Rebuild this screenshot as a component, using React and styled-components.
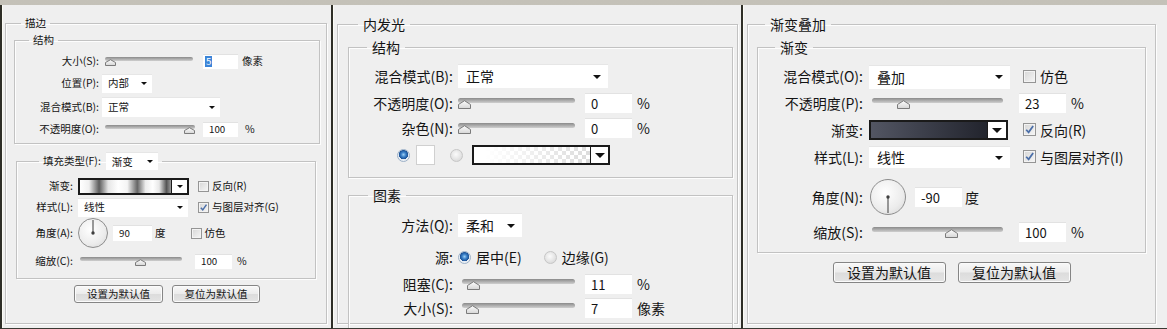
import React from "react";
import styled, { createGlobalStyle } from "styled-components";

const GlobalStyle = createGlobalStyle`
  html, body { margin: 0; padding: 0; background: #cdcac2; }
  body { font-family: "Noto Sans CJK SC", "Noto Sans", sans-serif; color: #141414; }
  * { box-sizing: border-box; }
`;

const Page = styled.div`
  width: 1167px;
  height: 329px;
  overflow: hidden;
  padding-top: 5px;
  background: linear-gradient(#c4c1b8, #d3d0c8);
`;

const Panels = styled.div`
  display: flex;
  height: 324px;
`;

const Panel = styled.section`
  flex: none;
  width: ${(p) => p.$w}px;
  height: 100%;
  overflow: hidden;
  background: #efefef;
  border-left: 2px solid #2e2e27;
  border-bottom: 1px solid #3a3a33;
  box-shadow: inset 1px 0 0 #fbfbf4;
  font-size: ${(p) => p.$fs}px;
  line-height: 1.2;
`;

const Group = styled.fieldset`
  margin: ${(p) => p.$m};
  padding: ${(p) => p.$p};
  min-width: 0;
  border: 1px solid #c2c2c2;
  box-shadow: inset 1px 1px 0 #fdfdfd, 1px 1px 0 #fdfdfd;
  ${(p) => (p.$h ? `height: ${p.$h}px;` : "")}
  --lw: ${(p) => p.$lw || 0}px;
  --lg: ${(p) => p.$lg || 0}px;
`;

const Legend = styled.legend`
  margin-left: ${(p) => p.$ml}px;
  padding: 0 ${(p) => p.$pad ?? 5}px;
  height: ${(p) => p.$lh}px;
  line-height: ${(p) => p.$lh}px;
`;

const LegendInner = styled.span`
  display: inline-flex;
  align-items: center;
  height: 100%;
  gap: ${(p) => p.$gap}px;
`;

const Row = styled.div`
  display: flex;
  align-items: center;
  height: ${(p) => p.$h}px;
  margin-top: ${(p) => p.$mt || 0}px;
  padding-left: ${(p) => p.$pl || 0}px;
  white-space: nowrap;
`;

const Label = styled.span`
  flex: none;
  width: var(--lw);
  margin-right: var(--lg);
  text-align: right;
`;

const Unit = styled.span`
  flex: none;
  margin-left: ${(p) => p.$ml || 0}px;
`;

const Field = styled.div`
  flex: none;
  display: flex;
  align-items: center;
  width: ${(p) => p.$w}px;
  height: ${(p) => p.$h}px;
  margin-left: ${(p) => p.$ml || 0}px;
  padding-left: ${(p) => p.$pl ?? 6}px;
  background: #fff;
  border-top: 1px solid #e2e2e2;
  font-size: 0.93em;
`;

const Picked = styled.span`
  background: #3b84d8;
  color: #fff;
  padding: 0 1px;
`;

const SelectBox = styled.div`
  flex: none;
  display: flex;
  align-items: center;
  justify-content: space-between;
  width: ${(p) => p.$w}px;
  height: ${(p) => p.$h}px;
  margin-left: ${(p) => p.$ml || 0}px;
  padding: 0 ${(p) => p.$pr}px 0 ${(p) => p.$pl}px;
  background: #fff;
  border-top: 1px solid #e6e6e6;
`;

const Caret = styled.span`
  width: 0;
  height: 0;
  border-left: ${(p) => p.$s}px solid transparent;
  border-right: ${(p) => p.$s}px solid transparent;
  border-top: ${(p) => p.$s}px solid #111;
`;

const Select = ({ w, h, ml, small, children }) => (
  <SelectBox $w={w} $h={h} $ml={ml} $pl={small ? 6 : 8} $pr={small ? 5 : 7}>
    <span>{children}</span>
    <Caret $s={small ? 3 : 4} />
  </SelectBox>
);

const SliderBox = styled.div`
  position: relative;
  flex: none;
  width: ${(p) => p.$w}px;
  height: 16px;
  margin-left: ${(p) => p.$ml || 0}px;
`;

const Track = styled.div`
  position: absolute;
  left: 0;
  right: 0;
  top: ${(p) => (p.$small ? 4 : 3)}px;
  height: ${(p) => (p.$small ? 4 : 5)}px;
  border-radius: 3px;
  background: linear-gradient(#8a8a8a, #a9a9a9 45%, #cfcfcf);
`;

const Thumb = styled.svg`
  position: absolute;
  top: ${(p) => (p.$small ? 6 : 5)}px;
`;

const Slider = ({ w, v, ml, small }) => {
  const tw = small ? 11 : 13;
  const th = small ? 7 : 9;
  return (
    <SliderBox $w={w} $ml={ml}>
      <Track $small={small} />
      <Thumb
        $small={small}
        width={tw}
        height={th}
        style={{ left: Math.round(v * (w - tw)) }}
      >
        <defs>
          <linearGradient id="thumbFill" x1="0" y1="0" x2="0" y2="1">
            <stop offset="0" stopColor="#fdfdfd" />
            <stop offset="1" stopColor="#d6d6d6" />
          </linearGradient>
        </defs>
        <path
          d={`M0.5 ${th - 0.5} V${th / 2} L${tw / 2} 0.7 L${tw - 0.5} ${th / 2} V${th - 0.5} Z`}
          fill="url(#thumbFill)"
          stroke="#7b7b7b"
          strokeWidth="1"
          strokeLinejoin="round"
        />
      </Thumb>
    </SliderBox>
  );
};

const CheckWrap = styled.span`
  flex: none;
  display: inline-flex;
  align-items: center;
  gap: ${(p) => p.$gap}px;
  margin-left: ${(p) => p.$ml || 0}px;
`;

const CheckBox = styled.span`
  flex: none;
  display: inline-flex;
  align-items: center;
  justify-content: center;
  width: ${(p) => p.$s}px;
  height: ${(p) => p.$s}px;
  border: 1px solid #959595;
  background: linear-gradient(135deg, #d6d6d6, #f6f6f6);
  box-shadow: inset 0 0 0 1px #f3f3f3;
`;

const Check = ({ on, ml, small, children }) => {
  const s = small ? 11 : 13;
  return (
    <CheckWrap $ml={ml} $gap={small ? 3 : 4}>
      <CheckBox $s={s}>
        {on && (
          <svg width={s - 2} height={s - 2} viewBox="0 0 10 10">
            <path d="M2 5.2 L4.2 7.6 L8.3 1.8" fill="none" stroke="#4a6ea8" strokeWidth="1.6" />
          </svg>
        )}
      </CheckBox>
      {children}
    </CheckWrap>
  );
};

const Radio = styled.span`
  flex: none;
  width: 13px;
  height: 13px;
  border-radius: 50%;
  margin-left: ${(p) => p.$ml || 0}px;
  border: 1px solid ${(p) => (p.$on ? "#9db1c8" : "#c6c6c6")};
  background: ${(p) =>
    p.$on
      ? "radial-gradient(circle at 50% 42%, #9fd0f5 0, #3a80c8 28%, #1c5296 52%, #e4ebf2 58%, #f7f7f7 100%)"
      : "radial-gradient(circle at 45% 40%, #fbfbfb, #dadada 80%)"};
`;

const RadioText = styled.span`
  flex: none;
  margin-left: ${(p) => p.$ml || 0}px;
`;

const ColorChip = styled.span`
  flex: none;
  width: ${(p) => p.$w}px;
  height: ${(p) => p.$h}px;
  margin-left: ${(p) => p.$ml || 0}px;
  background: #fff;
  border: 1px solid #d0d0d0;
`;

const fills = {
  bands:
    "linear-gradient(to right, #fff 0%, #f0f0f0 10%, #5c5c5c 21%, #e6e6e6 31%, #fff 42%, #f4f4f4 52%, #666 63%, #ececec 72%, #fff 80%, #e8e8e8 87%, #555 95%, #9a9a9a 100%)",
  checker:
    "linear-gradient(to right, #fff 10%, rgba(255,255,255,0.2)), repeating-conic-gradient(#d3d3d3 0 25%, #fff 0 50%) 0 0 / 8px 8px",
  dark: "linear-gradient(to right, #535663, #3c3f4b 45%, #22242d)",
};

const SwatchBox = styled.div`
  flex: none;
  display: flex;
  width: ${(p) => p.$w}px;
  height: ${(p) => p.$h}px;
  margin-left: ${(p) => p.$ml || 0}px;
  border: ${(p) => (p.$thick ? 2 : 1)}px solid #1a1a1a;
  background: #fff;
`;

const SwatchFill = styled.div`
  flex: 1;
  background: ${(p) => fills[p.$kind]};
  border-right: 1px solid #1a1a1a;
`;

const SwatchArrow = styled.div`
  flex: none;
  width: ${(p) => p.$aw}px;
  display: flex;
  align-items: center;
  justify-content: center;
`;

const Swatch = ({ kind, w, h, aw, ml, small, thick }) => (
  <SwatchBox $w={w} $h={h} $ml={ml} $thick={thick}>
    <SwatchFill $kind={kind} />
    <SwatchArrow $aw={aw}>
      <Caret $s={small ? 3.5 : 5} />
    </SwatchArrow>
  </SwatchBox>
);

const DialBox = styled.span`
  flex: none;
  display: inline-flex;
  width: ${(p) => p.$d}px;
  height: ${(p) => p.$d}px;
  margin-left: ${(p) => p.$ml || 0}px;
  border-radius: 50%;
  border: 1px solid #8d8d8d;
  background: radial-gradient(circle at 42% 38%, #ffffff, #ececec 60%, #d4d4d4);
`;

const Dial = ({ d, angle, ml }) => {
  const c = d / 2 - 1;
  return (
    <DialBox $d={d} $ml={ml}>
      <svg width={d - 2} height={d - 2}>
        <line
          x1={c}
          y1={c}
          x2={c}
          y2={angle > 0 ? 1 : d - 3}
          stroke="#5a5a5a"
          strokeWidth="1.2"
        />
        <circle cx={c} cy={c} r="1.7" fill="#3e3e3e" />
      </svg>
    </DialBox>
  );
};

const Buttons = styled.div`
  display: flex;
  justify-content: center;
  gap: ${(p) => p.$gap}px;
  margin-top: ${(p) => p.$mt}px;
`;

const Button = styled.button`
  width: ${(p) => p.$w}px;
  height: ${(p) => p.$h}px;
  padding: 0;
  font: inherit;
  color: #151515;
  border: 1px solid #858585;
  border-radius: 3px;
  background: linear-gradient(#f8f8f8, #ececec 48%, #dcdcdc 52%, #e4e4e4);
  box-shadow: inset 0 0 0 1px #fbfbfb;
`;

function StrokePanel() {
  return (
    <Panel $w={331} $fs={10.5}>
      <Group $m="11px 4px 0 3px" $p="0 6px 0 8px" $h={308}>
        <Legend $ml={7} $lh={14} $pad={4}>描边</Legend>
        <Group $m="3px 0 0 0" $p="3px 0 5px 0" $lw={84} $lg={3}>
          <Legend $ml={14} $lh={14} $pad={4}>结构</Legend>
          <Row $h={22}>
            <Label>大小(S):</Label>
            <Slider w={88} v={0} ml={3} small />
            <Field $w={35} $h={15} $ml={10} $pl={2}>
              <Picked>5</Picked>
            </Field>
            <Unit $ml={4}>像素</Unit>
          </Row>
          <Row $h={22}>
            <Label>位置(P):</Label>
            <Select w={50} h={19} small>内部</Select>
          </Row>
          <Row $h={26}>
            <Label>混合模式(B):</Label>
            <Select w={118} h={20} small>正常</Select>
          </Row>
          <Row $h={18}>
            <Label>不透明度(O):</Label>
            <Slider w={90} v={1} ml={3} small />
            <Field $w={35} $h={15} $ml={8}>100</Field>
            <Unit $ml={7}>%</Unit>
          </Row>
        </Group>
        <Group $m="8px 4px 0 2px" $p="6px 0 4px 0" $lw={56} $lg={5}>
          <Legend $ml={22} $lh={18} $pad={4}>
            <LegendInner $gap={5}>
              填充类型(F):
              <Select w={52} h={18} small>渐变</Select>
            </LegendInner>
          </Legend>
          <Row $h={20}>
            <Label>渐变:</Label>
            <Swatch kind="bands" w={111} h={17} aw={15} small thick />
            <Check ml={9} small>反向(R)</Check>
          </Row>
          <Row $h={22}>
            <Label>样式(L):</Label>
            <Select w={110} h={19} small>线性</Select>
            <Check ml={10} small on>与图层对齐(G)</Check>
          </Row>
          <Row $h={30}>
            <Label>角度(A):</Label>
            <Dial d={30} angle={90} />
            <Field $w={39} $h={16} $ml={5}>90</Field>
            <Unit $ml={3}>度</Unit>
            <Check ml={25} small>仿色</Check>
          </Row>
          <Row $h={26}>
            <Label>缩放(C):</Label>
            <Slider w={102} v={0.6} ml={2} small />
            <Field $w={37} $h={15} $ml={13}>100</Field>
            <Unit $ml={5}>%</Unit>
          </Row>
        </Group>
        <Buttons $gap={9} $mt={6}>
          <Button $w={89} $h={18}>设置为默认值</Button>
          <Button $w={88} $h={18}>复位为默认值</Button>
        </Buttons>
      </Group>
    </Panel>
  );
}

function InnerGlowPanel() {
  return (
    <Panel $w={410} $fs={14}>
      <Group $m="10px 3px 0 4px" $p="0 4px 0 10px" $h={309}>
        <Legend $ml={10} $lh={18}>内发光</Legend>
        <Group $m="5px 0 0 0" $p="6px 0 7px 0" $lw={104} $lg={5}>
          <Legend $ml={18} $lh={18}>结构</Legend>
          <Row $h={28}>
            <Label>混合模式(B):</Label>
            <Select w={150} h={24}>正常</Select>
          </Row>
          <Row $h={26}>
            <Label>不透明度(O):</Label>
            <Slider w={117} v={0} />
            <Field $w={47} $h={20} $ml={10}>0</Field>
            <Unit $ml={5}>%</Unit>
          </Row>
          <Row $h={24}>
            <Label>杂色(N):</Label>
            <Slider w={117} v={0} />
            <Field $w={47} $h={20} $ml={10}>0</Field>
            <Unit $ml={5}>%</Unit>
          </Row>
          <Row $h={30} $pl={48}>
            <Radio $on />
            <ColorChip $w={19} $h={20} $ml={6} />
            <Radio $ml={15} />
            <Swatch kind="checker" w={138} h={20} aw={17} ml={9} thick />
          </Row>
        </Group>
        <Group $m="8px 0 0 0" $p="9px 0 0 0" $lw={104} $lg={5} $h={160}>
          <Legend $ml={19} $lh={18}>图素</Legend>
          <Row $h={24}>
            <Label>方法(Q):</Label>
            <Select w={64} h={24}>柔和</Select>
          </Row>
          <Row $h={20} $mt={10}>
            <Label>源:</Label>
            <Radio $on />
            <RadioText $ml={5}>居中(E)</RadioText>
            <Radio $ml={22} />
            <RadioText $ml={5}>边缘(G)</RadioText>
          </Row>
          <Row $h={20} $mt={7}>
            <Label>阻塞(C):</Label>
            <Slider w={113} v={0.05} ml={4} />
            <Field $w={47} $h={20} $ml={10}>11</Field>
            <Unit $ml={5}>%</Unit>
          </Row>
          <Row $h={20} $mt={4}>
            <Label>大小(S):</Label>
            <Slider w={113} v={0.04} ml={4} />
            <Field $w={47} $h={20} $ml={10}>7</Field>
            <Unit $ml={5}>像素</Unit>
          </Row>
        </Group>
      </Group>
    </Panel>
  );
}

function GradientPanel() {
  return (
    <Panel $w={426} $fs={14}>
      <Group $m="10px 11px 0 4px" $p="0 9px 0 9px" $h={309}>
        <Legend $ml={8} $lh={18}>渐变叠加</Legend>
        <Group $m="5px 0 0 0" $p="7px 0 10px 0" $lw={105} $lg={6}>
          <Legend $ml={17} $lh={18}>渐变</Legend>
          <Row $h={27}>
            <Label>混合模式(O):</Label>
            <Select w={141} h={24}>叠加</Select>
            <Check ml={13}>仿色</Check>
          </Row>
          <Row $h={26}>
            <Label>不透明度(P):</Label>
            <Slider w={131} v={0.21} ml={3} />
            <Field $w={47} $h={20} $ml={16}>23</Field>
            <Unit $ml={5}>%</Unit>
          </Row>
          <Row $h={28}>
            <Label>渐变:</Label>
            <Swatch kind="dark" w={139} h={20} aw={18} thick />
            <Check ml={15} on>反向(R)</Check>
          </Row>
          <Row $h={26}>
            <Label>样式(L):</Label>
            <Select w={141} h={22}>线性</Select>
            <Check ml={13} on>与图层对齐(I)</Check>
          </Row>
          <Row $h={38} $mt={8}>
            <Label>角度(N):</Label>
            <Dial d={36} angle={-90} ml={1} />
            <Field $w={47} $h={20} $ml={9}>-90</Field>
            <Unit $ml={3}>度</Unit>
          </Row>
          <Row $h={20} $mt={6}>
            <Label>缩放(S):</Label>
            <Slider w={131} v={0.62} ml={3} />
            <Field $w={47} $h={20} $ml={16}>100</Field>
            <Unit $ml={5}>%</Unit>
          </Row>
        </Group>
        <Buttons $gap={12} $mt={9}>
          <Button $w={113} $h={21}>设置为默认值</Button>
          <Button $w={113} $h={21}>复位为默认值</Button>
        </Buttons>
      </Group>
    </Panel>
  );
}

export default function App() {
  return (
    <>
      <GlobalStyle />
      <Page>
        <Panels>
          <StrokePanel />
          <InnerGlowPanel />
          <GradientPanel />
        </Panels>
      </Page>
    </>
  );
}
